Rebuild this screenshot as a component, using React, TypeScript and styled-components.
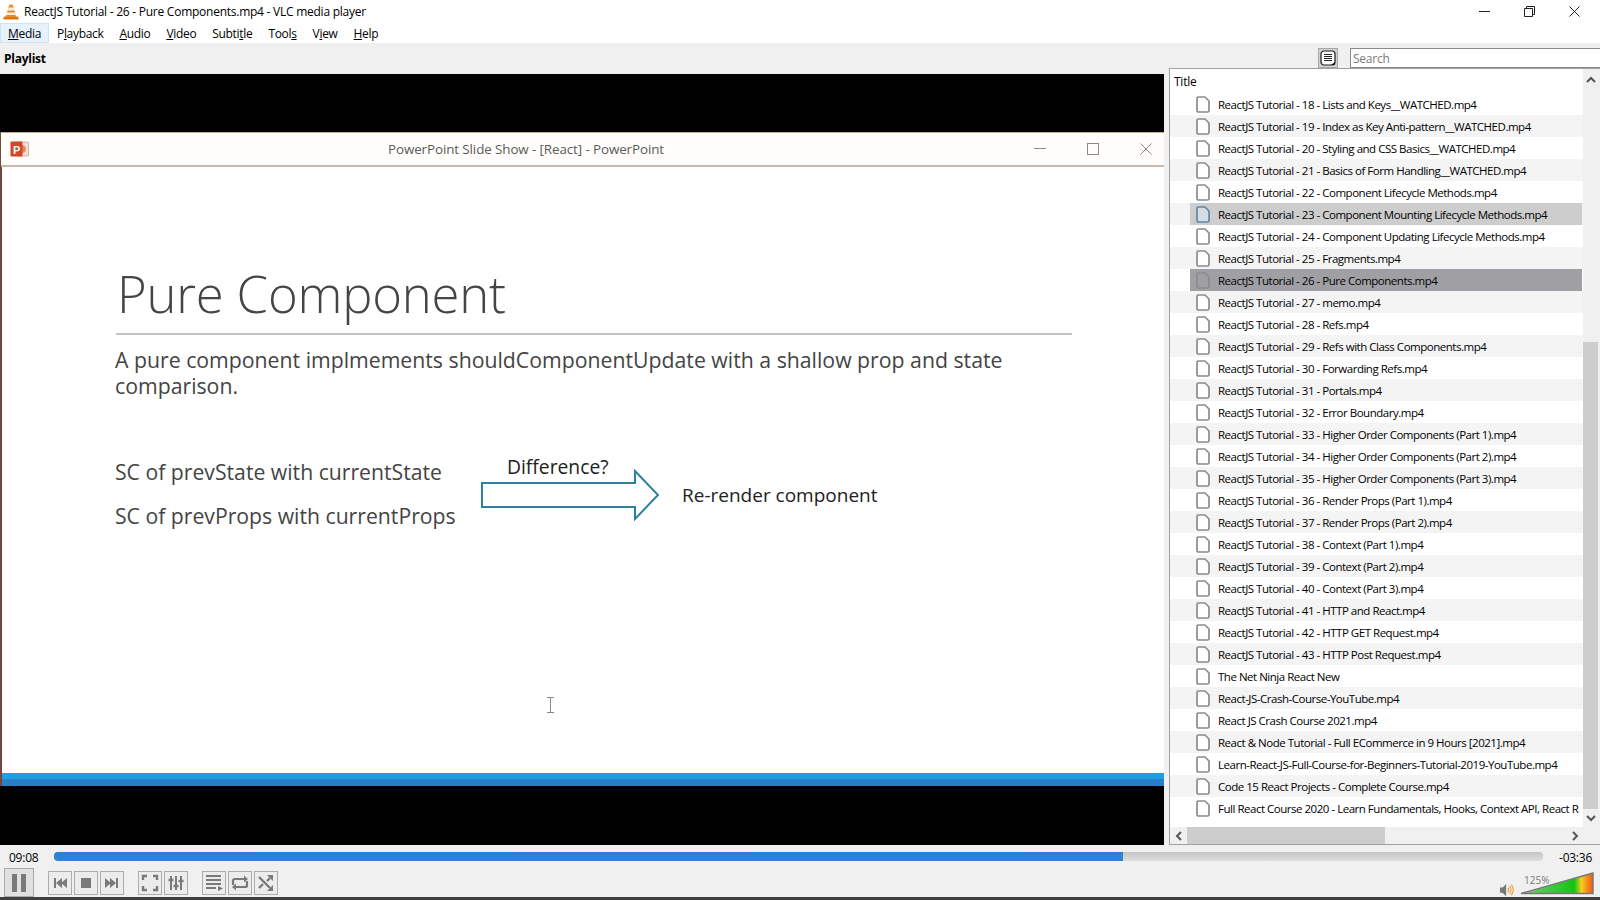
import React from "react";
import styled, { createGlobalStyle } from "styled-components";

const Global = createGlobalStyle`
  html, body { margin: 0; padding: 0; background: #f0f0f0; overflow: hidden; }
  #root { width: 1600px; height: 900px; }
  * { box-sizing: border-box; }
`;

const uiFont = `"Open Sans", "Noto Sans", "Liberation Sans", sans-serif`;

const Shell = styled.div`
  width: 1600px;
  height: 900px;
  display: flex;
  flex-direction: column;
  font-family: ${uiFont};
  font-size: 12px;
  letter-spacing: -0.25px;
  color: #000;
  background: #f0f0f0;
  position: relative;
  overflow: hidden;
`;

const TitleBar = styled.div`
  height: 23px;
  background: #fff;
  display: flex;
  align-items: center;
  padding-left: 3px;
`;
const TitleText = styled.span`
  margin-left: 5px;
  flex: 1;
  white-space: nowrap;
`;
const WindowButtons = styled.div`
  width: 121px;
  padding-right: 20px;
  display: flex;
  justify-content: space-between;
  align-items: center;
`;

const MenuBar = styled.div`
  height: 20px;
  background: #fff;
  display: flex;
  letter-spacing: -0.32px;
`;
const MenuItem = styled.div<{ $active?: boolean }>`
  height: 20px;
  line-height: ${(p) => (p.$active ? "20px" : "22px")};
  background: ${(p) => (p.$active ? "#e5f1fb" : "transparent")};
  border: ${(p) => (p.$active ? "1px solid #cce4f7" : "none")};
  padding: ${(p) => (p.$active ? "0 7px" : "0 8px")};
  u { text-underline-offset: 1px; }
`;

const Main = styled.div`
  flex: 1;
  min-height: 0;
  display: flex;
  gap: 5px;
`;
const LeftColumn = styled.div`
  width: 1164px;
  display: flex;
  flex-direction: column;
`;
const PlaylistHeader = styled.div`
  height: 31px;
  padding: 8px 0 0 4px;
  font-weight: 700;
  line-height: 16px;
`;
const VideoArea = styled.div`
  height: 771px;
  background: #000;
  padding-top: 58px;
`;
const Slide = styled.div`
  height: 654px;
  background: #fff;
  border-left: 2px solid #6d4c3d;
  display: flex;
  flex-direction: column;
`;
const PptBar = styled.div`
  height: 35px;
  flex: none;
  margin-left: -1px;
  background: #fffefb;
  border-top: 1px solid #c9ab9c;
  border-bottom: 2px solid #cdb6ab;
  display: flex;
  align-items: center;
  padding-left: 9px;
`;
const PptTitle = styled.div`
  width: 994px;
  text-align: center;
  color: #5a5a5a;
  font-size: 13.4px;
  letter-spacing: -0.1px;
`;
const PptButtons = styled.div`
  margin-left: 11px;
  display: flex;
  gap: 41px;
  align-items: center;
`;
const SlideBody = styled.div`
  flex: 1;
  padding: 90px 0 0 113px;
  color: #444;
  letter-spacing: 0;
`;
const SlideTitle = styled.div`
  font-size: 50.8px;
  font-weight: 300;
  line-height: 74px;
  width: 956px;
  margin-left: 1px;
  letter-spacing: -0.2px;
  padding-left: 1px;
  height: 78px;
  border-bottom: 2px solid #c4c4c4;
  color: #454545;
`;
const SlideLead = styled.div`
  margin-top: 12px;
  width: 920px;
  font-size: 21.25px;
  line-height: 26px;
`;
const Diagram = styled.div`
  margin-top: 58px;
  display: flex;
  align-items: flex-start;
`;
const Compare = styled.div`
  width: 366px;
  display: flex;
  flex-direction: column;
  gap: 14px;
  font-size: 21.2px;
  line-height: 30px;
  white-space: nowrap;
`;
const ArrowBox = styled.div`
  width: 178px;
  margin-top: -3px;
  color: #222;
  font-size: 19.3px;
  line-height: 26px;
`;
const ArrowLabel = styled.div`
  padding-left: 26px;
  height: 15px;
`;
const ArrowShape = styled.svg`
  display: block;
`;
const Rerender = styled.div`
  margin: 24px 0 0 23px;
  font-size: 19px;
  line-height: 28px;
  color: #222;
  white-space: nowrap;
`;
const BlueBar = styled.div`
  height: 13px;
  flex: none;
  background: linear-gradient(#1f9ee0 0, #1f9ee0 6px, #2a7fc9 6px, #2a7fc9 100%);
`;
const TextCursor = styled.svg`
  position: absolute;
  left: 546px;
  top: 697px;
`;

const RightColumn = styled.div`
  flex: 1;
  min-width: 0;
  display: flex;
  flex-direction: column;
`;
const SearchRow = styled.div`
  height: 26px;
  padding-top: 5px;
  display: flex;
  justify-content: flex-end;
  gap: 12px;
`;
const ListToggle = styled.div`
  width: 20px;
  height: 20px;
  background: #cfd3d6;
  border: 1px solid #a8a8a8;
  display: flex;
  align-items: center;
  justify-content: center;
`;
const SearchInput = styled.input`
  width: 250px;
  height: 20px;
  border: 1px solid #8a8a8a;
  border-right: none;
  background: #fff;
  padding: 0 2px;
  outline: none;
  font: inherit;
  letter-spacing: inherit;
  &::placeholder { color: #7a7a7a; opacity: 1; }
`;
const Panel = styled.div`
  height: 777px;
  border: 1px solid #a0a0a0;
  border-right: none;
  display: flex;
  background: #fff;
`;
const ListColumn = styled.div`
  width: 413px;
  display: flex;
  flex-direction: column;
`;
const ListHeader = styled.div`
  height: 24px;
  padding: 5px 0 0 4px;
  line-height: 16px;
`;
const Rows = styled.div`
  flex: 1;
  min-height: 0;
  overflow: hidden;
  font-size: 11.5px;
  letter-spacing: -0.48px;
`;
const Row = styled.div<{ $striped: boolean }>`
  height: 22px;
  padding-left: 20px;
  background: ${(p) => (p.$striped ? "#f4f4f4" : "#fff")};
`;
const RowBody = styled.div<{ $state?: "hover" | "current" }>`
  height: 22px;
  width: 392px;
  padding-left: 6px;
  display: flex;
  align-items: center;
  gap: 8px;
  white-space: nowrap;
  overflow: hidden;
  background: ${(p) =>
    p.$state === "current" ? "#a0a0a4" : p.$state === "hover" ? "#cdcdcd" : "transparent"};
`;
const HScroll = styled.div`
  height: 17px;
  flex: none;
  background: #f0f0f0;
  display: flex;
  align-items: center;
`;
const HThumb = styled.div`
  width: 198px;
  height: 100%;
  background: #cdcdcd;
`;
const ScrollArrow = styled.div`
  width: 17px;
  height: 17px;
  flex: none;
  display: flex;
  align-items: center;
  justify-content: center;
`;
const HSpacer = styled.div`
  flex: 1;
`;
const VScroll = styled.div`
  flex: 1;
  padding-top: 2px;
  background: #f0f0f0;
  display: flex;
  flex-direction: column;
`;
const VArrow = styled(ScrollArrow)`
  width: 15px;
`;
const VTrack = styled.div`
  flex: 1;
  padding-top: 254px;
`;
const VThumb = styled.div`
  height: 467px;
  width: 15px;
  background: #cdcdcd;
`;

const Controls = styled.div`
  height: 55px;
  flex: none;
  display: flex;
  flex-direction: column;
  border-bottom: 3px solid #404040;
  background: #f0f0f0;
`;
const SeekRow = styled.div`
  height: 23px;
  padding: 7px 8px 0 9px;
  display: flex;
  align-items: flex-start;
  line-height: 12px;
`;
const TimeLabel = styled.div`
  width: 45px;
  line-height: 12px;
`;
const SeekTrack = styled.div`
  width: 1489px;
  height: 9px;
  border-radius: 4px;
  background: linear-gradient(#c4c4c4, #dedede);
  overflow: hidden;
`;
const SeekFill = styled.div<{ $pct: number }>`
  width: ${(p) => p.$pct}%;
  height: 100%;
  background: linear-gradient(#2a7fd0, #2f86d8);
`;
const RemainLabel = styled.div`
  margin-left: auto;
  line-height: 12px;
`;
const ButtonRow = styled.div`
  flex: 1;
  display: flex;
  align-items: flex-start;
  padding-left: 4px;
`;
const PauseButton = styled.div`
  width: 30px;
  height: 29px;
  background: #e0e0e0;
  border: 1px solid #aaa;
  display: flex;
  align-items: center;
  justify-content: center;
  margin-right: 14px;
`;
const Group = styled.div<{ $after?: number }>`
  display: flex;
  gap: 2px;
  margin-top: 3px;
  margin-right: ${(p) => p.$after ?? 0}px;
`;
const CtlButton = styled.div`
  width: 24px;
  height: 24px;
  border: 1px solid #adadad;
  background: #ececec;
  display: flex;
  align-items: center;
  justify-content: center;
`;
const VolumeBox = styled.div`
  margin-left: auto;
  margin-right: 6px;
  margin-top: 3px;
  display: flex;
  align-items: flex-end;
  gap: 6px;
`;
const Speaker = styled.svg`
  margin-bottom: -2px;
`;
const VolumeMeter = styled.div`
  position: relative;
  width: 74px;
  height: 24px;
`;
const VolumePct = styled.span`
  position: absolute;
  left: 4px;
  top: 3px;
  z-index: 1;
  font-size: 10px;
  line-height: 12px;
  letter-spacing: 0;
  color: #7a7a7a;
`;

const items = [
  "ReactJS Tutorial - 18 - Lists and Keys__WATCHED.mp4",
  "ReactJS Tutorial - 19 - Index as Key Anti-pattern__WATCHED.mp4",
  "ReactJS Tutorial - 20 - Styling and CSS Basics__WATCHED.mp4",
  "ReactJS Tutorial - 21 - Basics of Form Handling__WATCHED.mp4",
  "ReactJS Tutorial - 22 - Component Lifecycle Methods.mp4",
  "ReactJS Tutorial - 23 - Component Mounting Lifecycle Methods.mp4",
  "ReactJS Tutorial - 24 - Component Updating Lifecycle Methods.mp4",
  "ReactJS Tutorial - 25 - Fragments.mp4",
  "ReactJS Tutorial - 26 - Pure Components.mp4",
  "ReactJS Tutorial - 27 - memo.mp4",
  "ReactJS Tutorial - 28 - Refs.mp4",
  "ReactJS Tutorial - 29 - Refs with Class Components.mp4",
  "ReactJS Tutorial - 30 - Forwarding Refs.mp4",
  "ReactJS Tutorial - 31 - Portals.mp4",
  "ReactJS Tutorial - 32 - Error Boundary.mp4",
  "ReactJS Tutorial - 33 - Higher Order Components (Part 1).mp4",
  "ReactJS Tutorial - 34 - Higher Order Components (Part 2).mp4",
  "ReactJS Tutorial - 35 - Higher Order Components (Part 3).mp4",
  "ReactJS Tutorial - 36 - Render Props (Part 1).mp4",
  "ReactJS Tutorial - 37 - Render Props (Part 2).mp4",
  "ReactJS Tutorial - 38 - Context (Part 1).mp4",
  "ReactJS Tutorial - 39 - Context (Part 2).mp4",
  "ReactJS Tutorial - 40 - Context (Part 3).mp4",
  "ReactJS Tutorial - 41 - HTTP and React.mp4",
  "ReactJS Tutorial - 42 - HTTP GET Request.mp4",
  "ReactJS Tutorial - 43 - HTTP Post Request.mp4",
  "The Net Ninja React New",
  "React-JS-Crash-Course-YouTube.mp4",
  "React JS Crash Course 2021.mp4",
  "React & Node Tutorial - Full ECommerce in 9 Hours [2021].mp4",
  "Learn-React-JS-Full-Course-for-Beginners-Tutorial-2019-YouTube.mp4",
  "Code 15 React Projects - Complete Course.mp4",
  "Full React Course 2020 - Learn Fundamentals, Hooks, Context API, React R",
];

const FileIcon = ({ state }: { state?: "hover" | "current" }) => {
  const stroke = state === "hover" ? "#5f87a6" : "#8c8c8c";
  const fill = state === "current" ? "#a0a0a4" : state === "hover" ? "#d5dde3" : "#fff";
  return (
    <svg width="14" height="17" viewBox="0 0 14 17" style={{ flex: "none" }}>
      <path
        d="M2.5 1H9l4 4v9.5c0 .9-.6 1.5-1.5 1.5h-9C1.6 16 1 15.4 1 14.5v-12C1 1.6 1.6 1 2.5 1Z"
        fill={fill}
        stroke={stroke}
        strokeWidth="1.7"
      />
    </svg>
  );
};

const VlcCone = () => (
  <svg width="16" height="17" viewBox="0 0 16 17">
    <path d="M1 13.5h14l.8 3H.2Z" fill="#d9761a" />
    <path d="M6.3 1h3.4L13 14H3Z" fill="#f08a12" />
    <path d="M5.6 4.5h4.8l.8 3H4.8ZM4.2 9.5h7.6l.7 2.6H3.5Z" fill="#f4f0e8" />
    <path d="M6.5 1h3l.3 1.2H6.2Z" fill="#d8d8d8" />
  </svg>
);

const PptIcon = () => (
  <svg width="19" height="18" viewBox="0 0 19 18">
    <rect x="7" y="2" width="11.5" height="14" rx="1" fill="#f1ddd4" stroke="#d9b3a0" />
    <path d="M12 5a4 4 0 1 1-3 6.6V5Z" fill="#e08a68" />
    <rect x="0.5" y="1.5" width="12" height="15" rx="1" fill="#d24726" />
    <text x="6.5" y="13.5" textAnchor="middle" fontFamily="Liberation Sans, sans-serif" fontWeight="700" fontSize="11" fill="#fff">
      P
    </text>
  </svg>
);

const Ico = ({ children, w = 22, h = 22 }: { children: React.ReactNode; w?: number; h?: number }) => (
  <svg width={w} height={h} viewBox={`0 0 ${w} ${h}`} fill="none">
    {children}
  </svg>
);

const gray = "#7a7a7a";

export default function App() {
  return (
    <Shell>
      <Global />
      <TitleBar>
        <VlcCone />
        <TitleText>ReactJS Tutorial - 26 - Pure Components.mp4 - VLC media player</TitleText>
        <WindowButtons>
          <svg width="11" height="11" viewBox="0 0 11 11"><path d="M0 5.5h11" stroke="#222" /></svg>
          <svg width="11" height="11" viewBox="0 0 11 11" fill="none"><path d="M.5 2.5h8v8h-8ZM2.5 2.5v-2h8v8h-2" stroke="#222" /></svg>
          <svg width="11" height="11" viewBox="0 0 11 11"><path d="M.5.5l10 10M10.5.5l-10 10" stroke="#222" /></svg>
        </WindowButtons>
      </TitleBar>
      <MenuBar>
        <MenuItem $active><u>M</u>edia</MenuItem>
        <MenuItem>P<u>l</u>ayback</MenuItem>
        <MenuItem><u>A</u>udio</MenuItem>
        <MenuItem><u>V</u>ideo</MenuItem>
        <MenuItem>Subti<u>t</u>le</MenuItem>
        <MenuItem>Tool<u>s</u></MenuItem>
        <MenuItem>V<u>i</u>ew</MenuItem>
        <MenuItem><u>H</u>elp</MenuItem>
      </MenuBar>
      <Main>
        <LeftColumn>
          <PlaylistHeader>Playlist</PlaylistHeader>
          <VideoArea>
            <Slide>
              <PptBar>
                <PptIcon />
                <PptTitle>PowerPoint Slide Show - [React] - PowerPoint</PptTitle>
                <PptButtons>
                  <svg width="12" height="12" viewBox="0 0 12 12"><path d="M0 5.5h12" stroke="#8a8a8a" /></svg>
                  <svg width="12" height="12" viewBox="0 0 12 12" fill="none"><rect x=".5" y=".5" width="11" height="11" stroke="#8a8a8a" /></svg>
                  <svg width="12" height="12" viewBox="0 0 12 12"><path d="M.5.5l11 11M11.5.5l-11 11" stroke="#8a8a8a" /></svg>
                </PptButtons>
              </PptBar>
              <SlideBody>
                <SlideTitle>Pure Component</SlideTitle>
                <SlideLead>
                  A pure component implmements shouldComponentUpdate with a shallow prop and state comparison.
                </SlideLead>
                <Diagram>
                  <Compare>
                    <div>SC of prevState with currentState</div>
                    <div>SC of prevProps with currentProps</div>
                  </Compare>
                  <ArrowBox>
                    <ArrowLabel>Difference?</ArrowLabel>
                    <ArrowShape width="180" height="52" viewBox="0 0 180 52" fill="none">
                      <path d="M1 14H154V2L177 26 154 50V38H1Z" stroke="#2f7f9f" strokeWidth="2" />
                    </ArrowShape>
                  </ArrowBox>
                  <Rerender>Re-render component</Rerender>
                </Diagram>
              </SlideBody>
              <BlueBar />
            </Slide>
          </VideoArea>
        </LeftColumn>
        <RightColumn>
          <SearchRow>
            <ListToggle>
              <svg width="16" height="16" viewBox="0 0 16 16" fill="none">
                <rect x="1" y="1" width="14" height="14" rx="3" fill="#fff" stroke="#1a1a1a" strokeWidth="1.2" />
                <path d="M4 4.5h8M4 6.5h8M4 8.5h8M4 10.5h8" stroke="#222" />
                <path d="M11 15l4-3v3Z" fill="#111" />
              </svg>
            </ListToggle>
            <SearchInput placeholder="Search" readOnly />
          </SearchRow>
          <Panel>
            <ListColumn>
              <ListHeader>Title</ListHeader>
              <Rows>
                {items.map((t, i) => {
                  const state = i === 8 ? "current" : i === 5 ? "hover" : undefined;
                  return (
                    <Row key={t} $striped={i % 2 === 1}>
                      <RowBody $state={state}>
                        <FileIcon state={state} />
                        <span>{t}</span>
                      </RowBody>
                    </Row>
                  );
                })}
              </Rows>
              <HScroll>
                <ScrollArrow>
                  <svg width="8" height="10" viewBox="0 0 8 10" fill="none"><path d="M6 1L2 5l4 4" stroke="#555" strokeWidth="2" /></svg>
                </ScrollArrow>
                <HThumb />
                <HSpacer />
                <ScrollArrow>
                  <svg width="8" height="10" viewBox="0 0 8 10" fill="none"><path d="M2 1l4 4-4 4" stroke="#555" strokeWidth="2" /></svg>
                </ScrollArrow>
              </HScroll>
            </ListColumn>
            <VScroll>
              <VArrow>
                <svg width="10" height="8" viewBox="0 0 10 8" fill="none"><path d="M1 6l4-4 4 4" stroke="#555" strokeWidth="2" /></svg>
              </VArrow>
              <VTrack><VThumb /></VTrack>
              <VArrow>
                <svg width="10" height="8" viewBox="0 0 10 8" fill="none"><path d="M1 2l4 4 4-4" stroke="#555" strokeWidth="2" /></svg>
              </VArrow>
              <VArrow />
              <VArrow />
            </VScroll>
          </Panel>
        </RightColumn>
      </Main>
      <Controls>
        <SeekRow>
          <TimeLabel>09:08</TimeLabel>
          <SeekTrack><SeekFill $pct={71.8} /></SeekTrack>
          <RemainLabel>-03:36</RemainLabel>
        </SeekRow>
        <ButtonRow>
          <PauseButton>
            <Ico w={16} h={20}><path d="M1 1h5v18H1ZM10 1h5v18h-5Z" fill={gray} /></Ico>
          </PauseButton>
          <Group $after={14}>
            <CtlButton><Ico><path d="M5 6h2v10H5ZM7 11l6-5v10ZM12 11l6-5v10Z" fill={gray} /></Ico></CtlButton>
            <CtlButton><Ico><path d="M6 6h10v10H6Z" fill={gray} /></Ico></CtlButton>
            <CtlButton><Ico><path d="M17 6h-2v10h2ZM15 11L9 6v10ZM10 11L4 6v10Z" fill={gray} /></Ico></CtlButton>
          </Group>
          <Group $after={14}>
            <CtlButton><Ico><path d="M4 8V4h4M14 4h4v4M18 14v4h-4M8 18H4v-4" stroke={gray} strokeWidth="2.4" /></Ico></CtlButton>
            <CtlButton><Ico><path d="M6 4v14M11 4v14M16 4v14" stroke={gray} strokeWidth="2" /><path d="M3.5 8h5M8.5 14h5M13.5 9h5" stroke={gray} strokeWidth="2.6" /></Ico></CtlButton>
          </Group>
          <Group>
            <CtlButton><Ico><path d="M3 4h15M3 8h15M3 12h15M3 16h10" stroke={gray} strokeWidth="2" /><path d="M15 14l5 2.5-5 2.5Z" fill={gray} /></Ico></CtlButton>
            <CtlButton><Ico><path d="M4 13V8.5C4 7.5 5 7 6 7h10M18 9v4.5c0 1-1 1.5-2 1.5H6" stroke={gray} strokeWidth="2.2" /><path d="M15 3.5l4 3.5-4 3.5ZM7 11.5L3 15l4 3.5Z" fill={gray} /></Ico></CtlButton>
            <CtlButton><Ico><path d="M4 5l11 11M4 16l4-4M12 9l3-3" stroke={gray} strokeWidth="2.4" /><path d="M18 3v6l-6-6ZM18 19v-6l-6 6Z" fill={gray} /></Ico></CtlButton>
          </Group>
          <VolumeBox>
            <Speaker width="14" height="14" viewBox="0 0 16 16" fill="none">
              <path d="M0 5h3l4-4v14l-4-4H0Z" fill="#777" />
              <path d="M9 5.5c1 1.5 1 3.5 0 5M11 3.5c2 2.5 2 6.5 0 9M13 2c2.7 3.5 2.7 8.5 0 12" stroke="#f09a2a" strokeWidth="1.4" />
            </Speaker>
            <VolumeMeter>
              <VolumePct>125%</VolumePct>
              <svg width="74" height="24" viewBox="0 0 74 24">
                <defs>
                  <linearGradient id="vol" x1="0" x2="1" y1="0" y2="0">
                    <stop offset="0" stopColor="#78cc78" />
                    <stop offset="0.74" stopColor="#14c414" />
                    <stop offset="0.84" stopColor="#f2cf20" />
                    <stop offset="0.92" stopColor="#f58a1c" />
                    <stop offset="1" stopColor="#ee5a14" />
                  </linearGradient>
                </defs>
                <path d="M1 22.5L73 2v20.500Z" fill="url(#vol)" stroke="#777" strokeWidth="1.4" />
              </svg>
            </VolumeMeter>
          </VolumeBox>
        </ButtonRow>
      </Controls>
      <TextCursor width="9" height="16" viewBox="0 0 9 16" fill="none">
        <path d="M1 .5h7M1 15.5h7M4.5 .5v15" stroke="#888" />
      </TextCursor>
    </Shell>
  );
}
